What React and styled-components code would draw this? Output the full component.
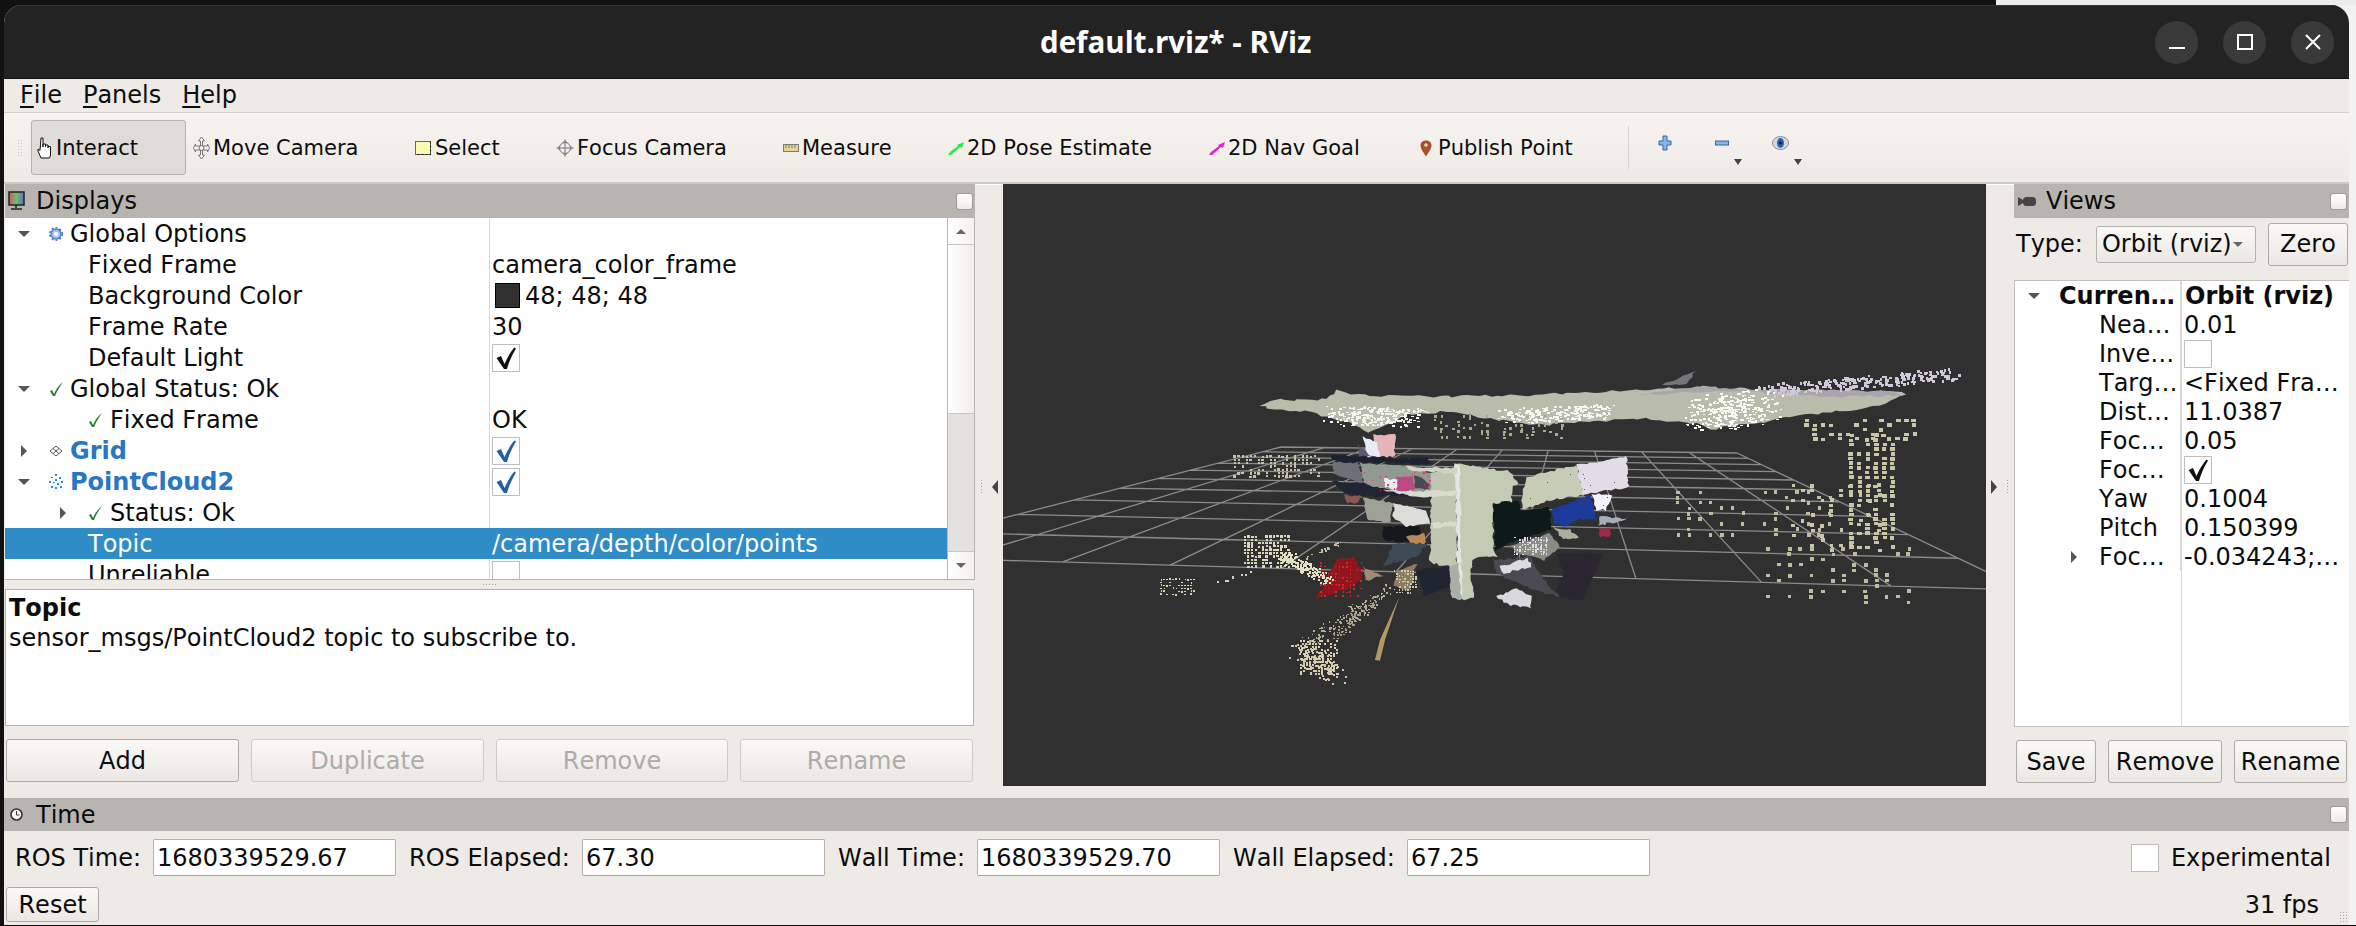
import React from 'react';
import styled, { createGlobalStyle } from 'styled-components';

const GlobalStyle = createGlobalStyle`
  html, body {
    margin: 0;
    padding: 0;
    overflow: hidden;
  }
  * {
    box-sizing: border-box;
  }
`;

const Page = styled.div`
  width: 2356px;
  height: 926px;
  padding: 5px 7px 1px 4px;
  overflow: hidden;
  font-family: 'DejaVu Sans', sans-serif;
  font-size: 24px;
  font-kerning: none;
  color: #0c0c0c;
  background:
    linear-gradient(#0c0c0c, #0c0c0c) bottom / 100% 1px no-repeat,
    linear-gradient(to right, #ececec 0 2267px, #1c2436 2267px 2311px, #f4f4f4 2311px) right top / 360px 5px no-repeat,
    linear-gradient(to right, #111111 0 1996px, #f2f2f2 1996px);
`;

const Window = styled.div`
  width: 2345px;
  height: 920px;
  display: flex;
  flex-direction: column;
  background: #eeebe6;
  border-radius: 18px 18px 0 0;
  overflow: hidden;
`;

const TitleBar = styled.div`
  height: 74px;
  flex: none;
  display: flex;
  align-items: center;
  justify-content: flex-end;
  position: relative;
  padding-right: 15px;
  gap: 25px;
  background: #232323;
  border-top: 1px solid #343434;
  border-bottom: 1px solid #111111;
`;

const WindowTitle = styled.div`
  position: absolute;
  left: 1036px;
  top: 18px;
  font-family: 'Open Sans', sans-serif;
  font-weight: 700;
  font-size: 29.5px;
  line-height: 36px;
  color: #ffffff;
`;

const WindowButton = styled.div`
  width: 43px;
  height: 43px;
  border-radius: 50%;
  background: #3a3a3a;
  display: flex;
  align-items: center;
  justify-content: center;
`;

const MenuBar = styled.div`
  height: 34px;
  flex: none;
  display: flex;
  gap: 21px;
  padding-left: 16px;
  align-items: center;
  background: #eeebe6;
  border-bottom: 1px solid #d3cfc9;
`;

const MenuItem = styled.span`
  line-height: 33px;
  u {
    text-underline-offset: 3px;
    text-decoration-thickness: 2px;
  }
`;

const ToolBar = styled.div`
  height: 71px;
  flex: none;
  display: flex;
  align-items: center;
  padding-left: 13px;
  background: linear-gradient(#f7f4ef, #eeebe6);
  border-bottom: 2px solid #cfcbc5;
  box-shadow: 0 1px 0 #ffffff;
  font-size: 21px;
`;

const Handle = styled.div`
  width: 5px;
  height: 18px;
  flex: none;
  margin-right: 9px;
  background-image: radial-gradient(#c9c6c0 0.8px, transparent 1px);
  background-size: 3px 3px;
`;

const ToolButton = styled.div`
  width: ${p => p.$w}px;
  height: 55px;
  flex: none;
  display: flex;
  align-items: center;
  gap: ${p => p.$gap || 3}px;
  margin-right: ${p => p.$after || 0}px;
  padding: 1px 0 0 5px;
  border-radius: 3px;
  border: 1px solid ${p => (p.$active ? '#b5b2ad' : 'transparent')};
  background: ${p => (p.$active ? '#dedbd8' : 'transparent')};
`;

const ToolDivider = styled.div`
  width: 1px;
  height: 43px;
  flex: none;
  margin: 0 15px 0 9px;
  background: #d7d3cd;
`;

const MiniTool = styled.div`
  width: 57px;
  height: 55px;
  flex: none;
  display: flex;
  padding: 15px 0 0 14px;
  gap: 5px;
`;

const DropMark = styled.span`
  width: 0;
  height: 0;
  margin-top: 24px;
  border-left: 4px solid transparent;
  border-right: 4px solid transparent;
  border-top: 6px solid #444444;
`;

const DockArea = styled.div`
  height: 614px;
  flex: none;
  display: flex;
`;

const LeftDock = styled.div`
  width: 971px;
  flex: none;
  padding-left: 1px;
  display: flex;
  flex-direction: column;
`;

const RightDock = styled.div`
  width: 335px;
  flex: none;
  display: flex;
  flex-direction: column;
`;

const DockTitle = styled.div`
  height: ${p => p.$h || 34}px;
  flex: none;
  display: flex;
  align-items: center;
  background: #b8b4b0;
  padding-left: ${p => p.$pad || 3}px;
  padding-right: 2px;
  gap: ${p => p.$gap || 11}px;
`;

const FloatButton = styled.div`
  width: 17px;
  height: 17px;
  margin-left: auto;
  border-radius: 3px;
  background: linear-gradient(#ffffff, #eeebe6);
  border: 1px solid #9c9994;
`;

const TreeFrame = styled.div`
  height: 362px;
  flex: none;
  display: flex;
  overflow: hidden;
  background: #ffffff;
  border-bottom: 1px solid #b5b2ad;
`;

const TreeBody = styled.div`
  flex: 1;
  min-width: 0;
  overflow: hidden;
`;

const Row = styled.div`
  height: ${p => p.$h}px;
  display: grid;
  grid-template-columns: ${p => p.$split}px 1fr;
  background: ${p => (p.$selected ? '#308cc6' : 'transparent')};
  color: ${p => (p.$selected ? '#ffffff' : 'inherit')};
`;

const NameCell = styled.div`
  display: flex;
  align-items: center;
  padding-left: ${p => p.$indent}px;
  border-right: 1px solid ${p => (p.$selected ? '#308cc6' : '#d8d8d8')};
  white-space: nowrap;
  overflow: hidden;
  font-weight: ${p => (p.$bold ? 700 : 400)};
  color: ${p => p.$color || 'inherit'};
`;

const ValueCell = styled.div`
  display: flex;
  align-items: center;
  padding-left: ${p => p.$pad || 2}px;
  gap: 5px;
  white-space: nowrap;
  overflow: hidden;
  font-weight: ${p => (p.$bold ? 700 : 400)};
`;

const CaretSlot = styled.span`
  width: ${p => p.$w}px;
  flex: none;
  display: flex;
  justify-content: center;
  padding-right: ${p => p.$pad || 0}px;
`;

const Caret = styled.span`
  width: 0;
  height: 0;
  ${p =>
    p.$open
      ? `border-left: 6px solid transparent;
         border-right: 6px solid transparent;
         border-top: 6px solid #555;`
      : `border-top: 6px solid transparent;
         border-bottom: 6px solid transparent;
         border-left: 6px solid #555;`}
`;

const IconSlot = styled.span`
  width: ${p => p.$w}px;
  height: 20px;
  flex: none;
  display: flex;
  align-items: center;
`;

const Swatch = styled.span`
  width: 25px;
  height: 25px;
  flex: none;
  margin-left: 3px;
  background: #303030;
  border: 1px solid #000000;
`;

const CheckBox = styled.span`
  width: 28px;
  height: 28px;
  flex: none;
  display: flex;
  align-items: center;
  justify-content: center;
  background: #ffffff;
  border: 1px solid #bdbdbd;
`;

const ScrollBar = styled.div`
  width: 28px;
  flex: none;
  display: flex;
  flex-direction: column;
  border-left: 1px solid #b9b6b1;
  border-right: 1px solid #b9b6b1;
`;

const ScrollEnd = styled.div`
  height: ${p => p.$h}px;
  flex: none;
  display: flex;
  align-items: center;
  justify-content: center;
  background: linear-gradient(to right, #ffffff, #f3f1ee);
  border-${p => (p.$top ? 'bottom' : 'top')}: 1px solid #c9c6c1;
`;

const ScrollThumb = styled.div`
  height: 169px;
  flex: none;
  background: linear-gradient(to right, #ffffff, #f1efec);
  border-bottom: 1px solid #c9c6c1;
`;

const ScrollTrough = styled.div`
  flex: 1;
  background: #e3e2df;
`;

const ScrollArrow = styled.span`
  width: 0;
  height: 0;
  border-left: 5px solid transparent;
  border-right: 5px solid transparent;
  border-${p => (p.$up ? 'bottom' : 'top')}: 5px solid #666;
`;

const HSplit = styled.div`
  height: 9px;
  flex: none;
  display: flex;
  align-items: center;
  justify-content: center;
`;

const Dots = styled.div`
  width: ${p => p.$w}px;
  height: ${p => p.$h}px;
  flex: none;
  background-image: radial-gradient(#a9a6a1 0.7px, transparent 1px);
  background-size: 3px 3px;
`;

const Description = styled.div`
  height: 137px;
  flex: none;
  padding: 4px 3px;
  line-height: 29.5px;
  margin-right: 1px;
  background: #ffffff;
  border: 1px solid #b5b2ad;
`;

const DescTitle = styled.div`
  font-weight: 700;
`;

const ButtonRow = styled.div`
  display: flex;
  gap: ${p => p.$gap}px;
  margin-top: ${p => p.$top}px;
  padding-left: ${p => p.$pad}px;
`;

const Button = styled.div`
  width: ${p => p.$w}px;
  height: ${p => p.$h || 43}px;
  flex: none;
  display: flex;
  align-items: center;
  justify-content: center;
  border-radius: 3px;
  background: linear-gradient(#fbf9f7, #ebe8e3);
  border: 1px solid ${p => (p.$disabled ? '#cfccc7' : '#aeaba6')};
  color: ${p => (p.$disabled ? '#aeaba8' : 'inherit')};
`;

const SideSplit = styled.div`
  width: 28px;
  flex: none;
  display: flex;
  align-items: center;
  justify-content: center;
  gap: 9px;
  padding-bottom: 8px;
  flex-direction: ${p => (p.$reverse ? 'row-reverse' : 'row')};
`;

const SideArrow = styled.span`
  width: 0;
  height: 0;
  border-top: 7px solid transparent;
  border-bottom: 7px solid transparent;
  border-${p => (p.$left ? 'right' : 'left')}: 6px solid #444;
`;

const Viewport = styled.div`
  width: 983px;
  height: 602px;
  flex: none;
  background: #303030;
  svg {
    display: block;
  }
`;

const TypeRow = styled.div`
  height: 62px;
  flex: none;
  display: flex;
  align-items: center;
  padding: 0 0 10px 2px;
`;

const Combo = styled.div`
  width: 160px;
  height: 37px;
  margin: 0 12px 0 13px;
  display: flex;
  align-items: center;
  justify-content: space-between;
  padding: 0 12px 0 5px;
  border-radius: 3px;
  border: 1px solid #b5b2ad;
  background: linear-gradient(#fbf9f7, #ebe8e3);
`;

const ViewsTree = styled.div`
  height: 447px;
  flex: none;
  background: #ffffff;
  border: 1px solid #c4c1bc;
  border-right: none;
  position: relative;
  overflow: hidden;
`;

const ViewsRule = styled.div`
  position: absolute;
  top: 0;
  bottom: 0;
  left: 166px;
  width: 1px;
  background: #d8d8d8;
`;

const TimeDock = styled.div`
  flex: 1;
  display: flex;
  flex-direction: column;
`;

const TimeRow = styled.div`
  display: flex;
  align-items: center;
  padding: 8px 18px 0 11px;
`;

const TimeLabel = styled.span`
  width: ${p => p.$w}px;
  flex: none;
  white-space: nowrap;
`;

const TimeField = styled.div`
  width: 243px;
  height: 37px;
  flex: none;
  margin-right: 13px;
  padding-left: 3px;
  display: flex;
  align-items: center;
  border-radius: 2px;
  background: #ffffff;
  border: 1px solid #b5b2ad;
  border-bottom-color: #a5a29d;
`;

const Experimental = styled.div`
  margin-left: auto;
  display: flex;
  align-items: center;
  gap: 12px;
`;

const StatusRow = styled.div`
  display: flex;
  align-items: center;
  justify-content: space-between;
  padding: 11px 0 0 2px;
`;

const Fps = styled.span`
  margin-left: auto;
  margin-right: 20px;
`;

const Grip = styled.div`
  width: 10px;
  height: 11px;
  align-self: flex-end;
  background-image: radial-gradient(#aaa7a2 0.8px, transparent 1px);
  background-size: 3px 3px;
`;

/* ---- icons ---- */

const Check = ({ color = '#111' }) => (
  <svg width="26" height="26" viewBox="0 0 26 26">
    <path d="M3.500 13L8 11l3.500 8C14 13 17.500 7 21.500 2.500L23 3.500C19 10 16 17 14 24h-3z" fill={color} />
  </svg>
);

const GreenCheck = () => (
  <svg width="15" height="16" viewBox="0 0 15 16">
    <path d="M1 10l2-1 2 4c2-5 5-9 9-12-3 4-6 9-8 14H4z" fill="#2a7d2a" />
  </svg>
);

const GearIcon = () => (
  <svg width="14" height="16" viewBox="0 0 14 16">
    <circle cx="7" cy="8" r="5" fill="#a8c4ec" stroke="#4a7fc8" strokeWidth="1.4" />
    <circle cx="7" cy="8" r="6.2" fill="none" stroke="#4a7fc8" strokeWidth="1.6" strokeDasharray="2 2" />
    <circle cx="7" cy="8" r="2" fill="#ffffff" />
  </svg>
);

const GridIcon = () => (
  <svg width="14" height="12" viewBox="0 0 14 12">
    <path d="M7 1l6 5-6 5-6-5zM4 3.500l6 5M10 3.500l-6 5" fill="none" stroke="#555" />
  </svg>
);

const CloudIcon = () => (
  <svg width="15" height="16" viewBox="0 0 15 16">
    <path
      d="M6 0h2v2H6zM2 3h2v1H2zM10 3h2v2h-2zM6 5h2v2H6zM0 7h2v2H0zM12 7h2v2h-2zM4 8h2v1H4zM8 9h2v2H8zM2 12h2v2H2zM11 12h2v2h-2zM6 13h2v2H6z"
      fill="#1f8fe6"
    />
  </svg>
);

const MonitorIcon = () => (
  <svg width="17" height="20" viewBox="0 0 17 20">
    <defs>
      <linearGradient id="screen" x1="0" x2="1">
        <stop offset="0" stopColor="#c85a5a" />
        <stop offset="0.5" stopColor="#6fbf6f" />
        <stop offset="1" stopColor="#6a6ac8" />
      </linearGradient>
    </defs>
    <rect x="1" y="1" width="15" height="13" fill="url(#screen)" stroke="#222" strokeWidth="1.5" />
    <path d="M8 14v3M3 18h11" stroke="#222" strokeWidth="1.6" />
  </svg>
);

const CameraIcon = () => (
  <svg width="18" height="11" viewBox="0 0 18 11">
    <path d="M0 1l5 3V7l-5 3z" fill="#444" />
    <rect x="5" y="1" width="13" height="9" rx="3.500" fill="#444" />
  </svg>
);

const ClockIcon = () => (
  <svg width="13" height="15" viewBox="0 0 13 15">
    <circle cx="6.500" cy="7.500" r="5.500" fill="#ffffff" stroke="#333" strokeWidth="1.6" />
    <path d="M6.500 4v4h3" fill="none" stroke="#333" />
  </svg>
);

const HandIcon = () => (
  <svg width="16" height="24" viewBox="0 0 16 24">
    <path
      d="M4 2h2v9V8h2.500v3V9H11v3-1.500h2.500V19l-1 3H4l-3-7v-2l2 1.500z"
      fill="#ffffff"
      stroke="#111"
      strokeWidth="1"
    />
  </svg>
);

const MoveIcon = () => (
  <svg width="17" height="24" viewBox="0 0 17 24">
    <path
      d="M8.500 1l3 4h-2v5h5V8l2 4-2 4v-2h-5v5h2l-3 4-3-4h2v-5h-5v2l-2-4 2-4v2h5V5h-2z"
      fill="#f4f4f4"
      stroke="#777"
      strokeWidth="1"
    />
    <circle cx="8.500" cy="12" r="2.500" fill="none" stroke="#777" />
  </svg>
);

const SelectIcon = () => (
  <svg width="17" height="14" viewBox="0 0 17 14">
    <rect x="0.500" y="0.500" width="15" height="13" fill="#fdf8b2" stroke="#666" />
    <path d="M15.500 0.500v13H1" fill="none" stroke="#111" strokeDasharray="2 2" />
  </svg>
);

const FocusIcon = () => (
  <svg width="18" height="18" viewBox="0 0 18 18">
    <path d="M9 0l2.500 4h-5zM9 18l-2.500-4h5zM0 9l4-2.500v5zM18 9l-4-2.500v5z" fill="#999" />
    <circle cx="9" cy="9" r="5.500" fill="#eeeeee" stroke="#777" />
    <path d="M9 3v12M3 9h12" stroke="#777" />
  </svg>
);

const RulerIcon = () => (
  <svg width="16" height="8" viewBox="0 0 16 8">
    <rect x="0.500" y="0.500" width="15" height="7" fill="#e0d59c" stroke="#7c7c70" />
    <path d="M3 1v3M6 1v3M9 1v3M12 1v3" stroke="#7c7c70" />
  </svg>
);

const ArrowIcon = ({ color }) => (
  <svg width="16" height="13" viewBox="0 0 16 13">
    <path d="M16 0l-2 6-2-1-9 8H0l2-3 8-6-1-1z" fill={color} />
  </svg>
);

const PinIcon = () => (
  <svg width="12" height="17" viewBox="0 0 12 17">
    <path d="M6 0.500C9 0.500 11.500 2 11.500 5.500 11.500 9 8.500 12 6 16.500 3.500 12 0.500 9 0.500 5.500 0.500 2 3 0.500 6 0.500z" fill="#a8502c" />
    <circle cx="6" cy="5" r="1.800" fill="#f0d8c8" />
  </svg>
);

const PlusIcon = () => (
  <svg width="14" height="16" viewBox="0 0 14 16">
    <path d="M5 1h4v5h4v4H9v5H5v-5H1V6h4z" fill="#8eb4e6" stroke="#2f66b0" />
  </svg>
);

const MinusIcon = () => (
  <svg width="14" height="16" viewBox="0 0 14 16">
    <rect x="0.500" y="6" width="13" height="4" fill="#8eb4e6" stroke="#2f66b0" />
  </svg>
);

const EyeIcon = () => (
  <svg width="17" height="16" viewBox="0 0 17 16">
    <ellipse cx="8.500" cy="8" rx="8" ry="6.500" fill="#d4d8e4" stroke="#8a8e9a" />
    <ellipse cx="8.500" cy="8" rx="3.500" ry="5" fill="#2f5fa8" />
    <circle cx="8.500" cy="8" r="1.500" fill="#10203c" />
  </svg>
);

/* ---- point cloud ---- */

const makeRandom = seed => () => {
  seed = (seed * 16807) % 2147483647;
  return seed / 2147483647;
};

// homography from the unit square, so the grid keeps its perspective
const quadMap = ([x0, y0], [x1, y1], [x2, y2], [x3, y3]) => {
  const sx = x0 - x1 + x2 - x3;
  const sy = y0 - y1 + y2 - y3;
  const dx1 = x1 - x2;
  const dx2 = x3 - x2;
  const dy1 = y1 - y2;
  const dy2 = y3 - y2;
  const det = dx1 * dy2 - dx2 * dy1;
  const g = (sx * dy2 - dx2 * sy) / det;
  const h = (dx1 * sy - sx * dy1) / det;
  return (u, v) => {
    const w = g * u + h * v + 1;
    return [
      ((x1 - x0 + g * x1) * u + (x3 - x0 + h * x3) * v + x0) / w,
      ((y1 - y0 + g * y1) * u + (y3 - y0 + h * y3) * v + y0) / w,
    ];
  };
};

const gridPath = () => {
  const map = quadMap([1281, 447], [1737, 453], [2025, 590], [855, 556]);
  let d = '';
  for (let i = 0; i <= 10; i++) {
    const a = map(0, i / 10);
    const b = map(1, i / 10);
    const c = map(i / 10, 0);
    const e = map(i / 10, 1);
    d += `M${a[0]} ${a[1]}L${b[0]} ${b[1]}M${c[0]} ${c[1]}L${e[0]} ${e[1]}`;
  }
  return d;
};

const dots = (seed, x, y, w, h, sx, sy, keep, size = 7, size2 = size) => {
  const rand = makeRandom(seed);
  let d = '';
  for (let py = y; py < y + h; py += sy) {
    for (let px = x; px < x + w; px += sx) {
      if (rand() < keep) {
        d += `M${px + rand() * 2} ${py + rand() * 2}h${size}v${size2}h${-size}z`;
      }
    }
  }
  return d;
};

// trail of dots between two points, with some spread
const trail = (seed, x0, y0, x1, y1, n, spread, size = 6, size2 = size) => {
  const rand = makeRandom(seed);
  let d = '';
  for (let i = 0; i < n; i++) {
    const t = rand();
    const px = x0 + (x1 - x0) * t + (rand() - 0.5) * spread;
    const py = y0 + (y1 - y0) * t + (rand() - 0.5) * spread;
    d += `M${px} ${py}h${size}v${size2}h${-size}z`;
  }
  return d;
};

// breaks the edges of a polygon up, scanned surfaces are never clean
const rough = (d, amount) => {
  const nums = d.match(/-?\d+(\.\d+)?/g).map(Number);
  const rand = makeRandom(nums[0] * 31 + nums[1] * 7 + 11);
  let out = '';
  for (let i = 0; i < nums.length; i += 2) {
    const x0 = nums[i];
    const y0 = nums[i + 1];
    const x1 = nums[(i + 2) % nums.length];
    const y1 = nums[(i + 3) % nums.length];
    const steps = Math.max(1, Math.round(Math.hypot(x1 - x0, y1 - y0) / 10));
    for (let s = 0; s < steps; s++) {
      const px = x0 + ((x1 - x0) * s) / steps + (rand() - 0.5) * amount;
      const py = y0 + ((y1 - y0) * s) / steps + (rand() - 0.5) * amount;
      out += `${out ? 'L' : 'M'}${px.toFixed(1)} ${py.toFixed(1)}`;
    }
  }
  return `${out}z`;
};

// drawn in the crop's coordinates, one group for the wide view and one for the centre
const wideShapes = [
  ['M410 195L430 180 515 178 525 150 560 165 700 170 830 165 990 150 1100 140 1200 150 1400 155 1420 165 1360 205 1250 225 1190 250 1110 268 1095 250 1000 235 850 255 780 240 700 215 640 225 580 275 540 245 480 215 420 207z', '#b9bbab'],
  ['M1040 135L1090 90 1075 130z', '#77747c'],
  ['M1000 165L1100 140 1200 150 1400 155 1420 165 1300 172 1150 152z', '#a9a5ac'],
];

const wideDots = [
  [trail(3, 1200, 150, 1500, 100, 230, 34, 4, 8), '#cfc8d8'],
  [trail(5, 530, 225, 650, 232, 220, 58, 4, 5), '#f4f4f0'],
  [trail(7, 790, 228, 950, 212, 220, 42, 4, 5), '#f6f6f2'],
  [trail(9, 1105, 225, 1190, 190, 300, 90, 4, 5), '#f8f8f4'],
  [dots(11, 680, 225, 200, 70, 9, 9, 0.35, 4, 7), '#a9a88e'],
  [dots(13, 1260, 235, 170, 60, 13, 14, 0.45, 7, 10), '#c7c6a6'],
  [dots(15, 1330, 280, 70, 340, 13, 14, 0.7, 7, 10), '#c7c6a6'],
  [dots(17, 1060, 450, 240, 140, 17, 16, 0.28, 5, 11), '#bdbc9c'],
  [dots(19, 1240, 430, 140, 200, 15, 15, 0.35, 6, 11), '#c7c6a6'],
  [dots(21, 1200, 620, 230, 170, 17, 16, 0.32, 6, 11), '#bdbc9c'],
];

const centerShapes = [
  ['M672 285L735 282 735 350 680 350z', '#e4b4b6'],
  ['M640 290L680 310 690 350 650 350z', '#e8ecf4'],
  ['M625 315L660 345 680 352 625 350z', '#5c5874'],
  ['M550 365L625 365 640 430 550 400z', '#6e7078'],
  ['M630 368L775 380 850 400 850 470 700 462 640 430z', '#8f9a90'],
  ['M545 345L700 352 830 355 845 375 700 368 620 365 600 370 547 360z', '#1c2230'],
  ['M548 425L640 430 720 452 800 470 700 468 640 470 580 460z', '#1f2532'],
  ['M585 465L640 470 620 490 590 488z', '#8a5a50'],
  ['M640 470L730 490 720 550 650 540z', '#9ea296'],
  ['M845 400L920 380 920 770 905 770 900 680 850 670 840 660z', '#bfc7b2'],
  ['M920 372L1080 395 1105 430 1085 445 1085 490 1030 490 1030 620 1040 650 970 655 960 700 975 770 935 780 925 770z', '#c4cbb5'],
  ['M915 372L930 372 936 770 925 770z', '#dfe7e2'],
  ['M770 380L920 385 920 400 780 392z', '#d0d4c4'],
  ['M700 450L920 455 920 465 800 472z', '#d8dccc'],
  ['M845 550L920 545 920 558 850 565z', '#d8dccc'],
  ['M740 410L790 408 792 450 740 452z', '#b84a88'],
  ['M705 415L740 420 740 450 705 440z', '#e6ecf0'],
  ['M792 405L840 430 835 445 795 448z', '#4a4852'],
  ['M730 490L830 510 840 550 770 560 730 530z', '#dcdcd8'],
  ['M700 560L810 560 825 612 700 600z', '#14181c'],
  ['M770 590L825 580 825 615 780 610z', '#b88858'],
  ['M730 610L830 610 800 650 700 680z', '#3c4a56'],
  ['M1030 490L1105 483 1110 510 1200 500 1205 570 1100 600 1035 630z', '#0e1a18'],
  ['M1130 410L1280 375 1300 465 1200 480 1120 510 1115 480z', '#c6ccb6'],
  ['M1280 375L1430 350 1435 440 1300 465z', '#e2dce6'],
  ['M1205 510L1320 465 1340 540 1290 535 1250 560 1210 550z', '#1c3a9c'],
  ['M1325 460L1385 465 1370 510 1340 510z', '#f2f2ff'],
  ['M1350 530L1435 535 1380 550 1345 555z', '#a8acb8'],
  ['M1345 565L1385 565 1380 590 1350 592z', '#a02848'],
  ['M1210 560L1260 570 1290 595 1240 600z', '#aab09c'],
  ['M1080 620L1200 580 1230 620 1180 660 1100 640z', '#8a8c84'],
  ['M1220 640L1360 640 1300 780 1210 770 1240 700z', '#2a2632'],
  ['M1030 660L1140 650 1180 720 1230 770 1150 750 1040 700z', '#4a4a52'],
  ['M1050 680L1130 655 1145 680 1060 700z', '#dcdce0'],
  ['M1040 770L1100 745 1145 770 1140 805 1080 795z', '#d8d8de'],
  ['M800 690L900 680 900 740 820 770z', '#1e2430'],
  ['M745 690L800 670 780 750 730 740z', '#8a7c62'],
  ['M900 680L925 670 935 780 905 770z', '#a8b0a6'],
  ['M500 775L560 660 615 650 640 710 600 745z', '#8f161c'],
  ['M640 680L700 708 650 722z', '#a08a78'],
];

const centerDots = [
  [dots(23, 250, 345, 255, 70, 12, 10, 0.55), '#c4c4a4'],
  [dots(25, 280, 585, 140, 95, 11, 10, 0.75), '#d8d8b8'],
  [trail(27, 390, 640, 530, 715, 170, 34), '#e0e0c4'],
  [dots(29, 30, 715, 100, 50, 9, 9, 0.6, 5), '#d4d4b8'],
  [trail(31, 205, 725, 300, 695, 9, 8), '#d4d4b8'],
  [trail(33, 470, 650, 570, 608, 24, 12, 5), '#c4c4a4'],
  [trail(35, 470, 905, 720, 750, 120, 40, 5), '#b4b094'],
  [trail(37, 560, 1000, 440, 930, 120, 60), '#d0c8aa'],
  [dots(47, 450, 900, 110, 100, 9, 9, 0.6, 6), '#d8d0b0'],
  [trail(39, 560, 880, 680, 770, 70, 30, 5), '#a89c84'],
  [dots(41, 510, 665, 130, 110, 11, 11, 0.4, 5), '#d8242a'],
  [dots(43, 730, 690, 70, 70, 8, 8, 0.5, 5), '#d0ccb0'],
  [dots(45, 1090, 590, 100, 50, 8, 7, 0.55, 5), '#e0dce8'],
  [dots(49, 640, 395, 200, 60, 6, 6, 0.08, 4), '#d83a70'],
  [dots(51, 1130, 400, 300, 100, 10, 12, 0.06, 3), '#555a50'],
];

const PointCloud = () => (
  <svg width="983" height="602" viewBox="1003 184 983 602">
    <path d={gridPath()} fill="none" stroke="#8b8b8b" strokeWidth="1.3" />
    <g transform="translate(1000 340) scale(0.6378 0.3333)">
      {wideShapes.map(([d, fill]) => (
        <path key={d} d={rough(d, 8)} fill={fill} />
      ))}
      {wideDots.map(([d, fill], i) => (
        <path key={i} d={d} fill={fill} shapeRendering="crispEdges" />
      ))}
    </g>
    <g transform="translate(1150 340) scale(0.3333)">
      {centerShapes.map(([d, fill]) => (
        <path key={d} d={rough(d, 7)} fill={fill} />
      ))}
      {centerDots.map(([d, fill], i) => (
        <path key={i} d={d} fill={fill} shapeRendering="crispEdges" />
      ))}
      <path d="M748 770L690 900 675 960 690 962 705 900z" fill="#b09a68" />
    </g>
  </svg>
);

/* ---- data ---- */

const tools = [
  { label: 'Interact', icon: <HandIcon />, w: 155, after: 1, active: true },
  { label: 'Move Camera', icon: <MoveIcon />, w: 222 },
  { label: 'Select', icon: <SelectIcon />, w: 141 },
  { label: 'Focus Camera', icon: <FocusIcon />, w: 227 },
  { label: 'Measure', icon: <RulerIcon />, w: 165 },
  { label: '2D Pose Estimate', icon: <ArrowIcon color="#22ee44" />, w: 261 },
  { label: '2D Nav Goal', icon: <ArrowIcon color="#e81fd0" />, w: 211 },
  { label: 'Publish Point', icon: <PinIcon />, w: 205, gap: 6 },
];

const displayRows = [
  { name: 'Global Options', depth: 0, caret: 'open', icon: <GearIcon /> },
  { name: 'Fixed Frame', depth: 1, value: 'camera_color_frame' },
  { name: 'Background Color', depth: 1, swatch: true, value: '48; 48; 48' },
  { name: 'Frame Rate', depth: 1, value: '30' },
  { name: 'Default Light', depth: 1, check: '#111111' },
  { name: 'Global Status: Ok', depth: 0, caret: 'open', icon: <GreenCheck /> },
  { name: 'Fixed Frame', depth: 1, icon: <GreenCheck />, value: 'OK' },
  { name: 'Grid', depth: 0, caret: 'closed', icon: <GridIcon />, bold: true, check: '#1f5fa8' },
  { name: 'PointCloud2', depth: 0, caret: 'open', icon: <CloudIcon />, bold: true, check: '#1f5fa8' },
  { name: 'Status: Ok', depth: 1, caret: 'closed', icon: <GreenCheck /> },
  { name: 'Topic', depth: 1, value: '/camera/depth/color/points', selected: true },
  { name: 'Unreliable', depth: 1, check: 'none' },
];

const viewRows = [
  { name: 'Nea…', value: '0.01' },
  { name: 'Inve…', check: 'none' },
  { name: 'Targ…', value: '<Fixed Fra…' },
  { name: 'Dist…', value: '11.0387' },
  { name: 'Foc…', value: '0.05' },
  { name: 'Foc…', check: '#111111' },
  { name: 'Yaw', value: '0.1004' },
  { name: 'Pitch', value: '0.150399' },
  { name: 'Foc…', value: '-0.034243;…', caret: true },
];

const timeFields = [
  { label: 'ROS Time:', w: 138, value: '1680339529.67' },
  { label: 'ROS Elapsed:', w: 173, value: '67.30' },
  { label: 'Wall Time:', w: 139, value: '1680339529.70' },
  { label: 'Wall Elapsed:', w: 174, value: '67.25' },
];

const DisplayRow = ({ row }) => (
  <Row $h={31} $split={485} $selected={row.selected}>
    <NameCell
      $indent={row.depth * 39}
      $bold={row.bold}
      $selected={row.selected}
      $color={row.bold ? '#2a76c6' : undefined}
    >
      <CaretSlot $w={44} $pad={6}>
        {row.caret && <Caret $open={row.caret === 'open'} />}
      </CaretSlot>
      {row.icon && <IconSlot $w={21 + row.depth}>{row.icon}</IconSlot>}
      {row.name}
    </NameCell>
    <ValueCell $pad={2}>
      {row.swatch && <Swatch />}
      {row.check && (
        <CheckBox>{row.check !== 'none' && <Check color={row.check} />}</CheckBox>
      )}
      {row.value}
    </ValueCell>
  </Row>
);

const App = () => (
  <Page>
    <GlobalStyle />
    <Window>
      <TitleBar>
        <WindowTitle>default.rviz* - RViz</WindowTitle>
        <WindowButton>
          <svg width="16" height="16" viewBox="0 0 16 16">
            <path d="M0 14h16" stroke="#fff" strokeWidth="2" />
          </svg>
        </WindowButton>
        <WindowButton>
          <svg width="16" height="16" viewBox="0 0 16 16">
            <rect x="1" y="1" width="14" height="14" fill="none" stroke="#fff" strokeWidth="2" />
          </svg>
        </WindowButton>
        <WindowButton>
          <svg width="16" height="16" viewBox="0 0 16 16">
            <path d="M1 1l14 14M15 1L1 15" stroke="#fff" strokeWidth="2" />
          </svg>
        </WindowButton>
      </TitleBar>

      <MenuBar>
        <MenuItem><u>F</u>ile</MenuItem>
        <MenuItem><u>P</u>anels</MenuItem>
        <MenuItem><u>H</u>elp</MenuItem>
      </MenuBar>

      <ToolBar>
        <Handle />
        {tools.map(tool => (
          <ToolButton
            key={tool.label}
            $w={tool.w}
            $after={tool.after}
            $active={tool.active}
            $gap={tool.gap}
          >
            {tool.icon}
            {tool.label}
          </ToolButton>
        ))}
        <ToolDivider />
        <MiniTool><PlusIcon /></MiniTool>
        <MiniTool><MinusIcon /><DropMark /></MiniTool>
        <MiniTool><EyeIcon /><DropMark /></MiniTool>
      </ToolBar>

      <DockArea>
        <LeftDock>
          <DockTitle>
            <MonitorIcon />
            <span>Displays</span>
            <FloatButton />
          </DockTitle>
          <TreeFrame>
            <TreeBody>
              {displayRows.map((row, i) => (
                <DisplayRow key={i} row={row} />
              ))}
            </TreeBody>
            <ScrollBar>
              <ScrollEnd $h={27} $top><ScrollArrow $up /></ScrollEnd>
              <ScrollThumb />
              <ScrollTrough />
              <ScrollEnd $h={28}><ScrollArrow /></ScrollEnd>
            </ScrollBar>
          </TreeFrame>
          <HSplit><Dots $w={16} $h={3} /></HSplit>
          <Description>
            <DescTitle>Topic</DescTitle>
            sensor_msgs/PointCloud2 topic to subscribe to.
          </Description>
          <ButtonRow $gap={12} $top={13} $pad={1}>
            <Button $w={233}>Add</Button>
            <Button $w={233} $disabled>Duplicate</Button>
            <Button $w={232} $disabled>Remove</Button>
            <Button $w={233} $disabled>Rename</Button>
          </ButtonRow>
        </LeftDock>

        <SideSplit>
          <Dots $w={3} $h={16} />
          <SideArrow $left />
        </SideSplit>

        <Viewport>
          <PointCloud />
        </Viewport>

        <SideSplit $reverse>
          <Dots $w={3} $h={16} />
          <SideArrow />
        </SideSplit>

        <RightDock>
          <DockTitle $pad={4} $gap={10}>
            <CameraIcon />
            <span>Views</span>
            <FloatButton />
          </DockTitle>
          <TypeRow>
            <span>Type:</span>
            <Combo>
              <span>Orbit (rviz)</span>
              <ScrollArrow />
            </Combo>
            <Button $w={80}>Zero</Button>
          </TypeRow>
          <ViewsTree>
            <ViewsRule />
            <Row $h={29} $split={166}>
              <NameCell $indent={0} $bold>
                <CaretSlot $w={44} $pad={6}><Caret $open /></CaretSlot>
                Curren…
              </NameCell>
              <ValueCell $pad={4} $bold>Orbit (rviz)</ValueCell>
            </Row>
            {viewRows.map((row, i) => (
              <Row key={i} $h={29} $split={166}>
                <NameCell $indent={40}>
                  <CaretSlot $w={44} $pad={6}>
                    {row.caret && <Caret />}
                  </CaretSlot>
                  {row.name}
                </NameCell>
                <ValueCell $pad={3}>
                  {row.check && (
                    <CheckBox>{row.check !== 'none' && <Check color={row.check} />}</CheckBox>
                  )}
                  {row.value}
                </ValueCell>
              </Row>
            ))}
          </ViewsTree>
          <ButtonRow $gap={12} $top={13} $pad={2}>
            <Button $w={80}>Save</Button>
            <Button $w={114}>Remove</Button>
            <Button $w={113}>Rename</Button>
          </ButtonRow>
        </RightDock>
      </DockArea>

      <TimeDock>
        <DockTitle $h={33} $gap={13} $pad={6}>
          <ClockIcon />
          <span>Time</span>
          <FloatButton />
        </DockTitle>
        <TimeRow>
          {timeFields.map(field => (
            <React.Fragment key={field.label}>
              <TimeLabel $w={field.w}>{field.label}</TimeLabel>
              <TimeField>{field.value}</TimeField>
            </React.Fragment>
          ))}
          <Experimental>
            <CheckBox />
            Experimental
          </Experimental>
        </TimeRow>
        <StatusRow>
          <Button $w={93} $h={35}>Reset</Button>
          <Fps>31 fps</Fps>
          <Grip />
        </StatusRow>
      </TimeDock>
    </Window>
  </Page>
);

export default App;
